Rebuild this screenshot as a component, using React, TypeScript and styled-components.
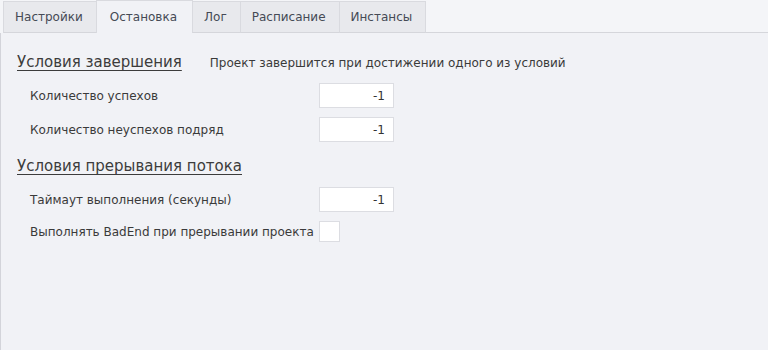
import styled, {createGlobalStyle} from 'styled-components'

const GlobalStyle = createGlobalStyle`
  html, body {
    margin: 0;
    padding: 0;
    background: #f1f2f6;
  }
  body {
    font-family: 'DejaVu Sans', 'Liberation Sans', sans-serif;
    color: #3a3a3a;
  }
`

const TABS = ['Настройки', 'Остановка', 'Лог', 'Расписание', 'Инстансы']
const ACTIVE_TAB = 1

type FieldRow = {label: string; value?: string; checkbox?: boolean}

const SECTIONS: {title: string; hint?: string; rows: FieldRow[]}[] = [
  {
    title: 'Условия завершения',
    hint: 'Проект завершится при достижении одного из условий',
    rows: [
      {label: 'Количество успехов', value: '-1'},
      {label: 'Количество неуспехов подряд', value: '-1'},
    ],
  },
  {
    title: 'Условия прерывания потока',
    rows: [
      {label: 'Таймаут выполнения (секунды)', value: '-1'},
      {label: 'Выполнять BadEnd при прерывании проекта', checkbox: true},
    ],
  },
]

export default function App() {
  return (
    <>
      <GlobalStyle />
      <Window>
        <TabBar>
          {TABS.map((tab, i) => (
            <Tab key={tab} $active={i === ACTIVE_TAB}>
              {tab}
            </Tab>
          ))}
          <TabFiller />
        </TabBar>
        <Panel>
          {SECTIONS.map((section) => (
            <Section key={section.title}>
              <SectionHead>
                <SectionTitle>{section.title}</SectionTitle>
                {section.hint && <Hint>{section.hint}</Hint>}
              </SectionHead>
              {section.rows.map((row) => (
                <Row key={row.label}>
                  <Label>{row.label}</Label>
                  {row.checkbox ? <CheckBox /> : <NumberBox>{row.value}</NumberBox>}
                </Row>
              ))}
            </Section>
          ))}
        </Panel>
      </Window>
    </>
  )
}

const Window = styled.div`
  width: 768px;
  height: 350px;
  display: flex;
  flex-direction: column;
  overflow: hidden;
  font-size: 12px;
`
const TabBar = styled.div`
  display: flex;
  align-items: flex-end;
  height: 33px;
  padding-left: 3px;
  background: #f4f5f8;
  flex-shrink: 0;
`
const Tab = styled.div<{$active: boolean}>`
  box-sizing: border-box;
  height: ${(p) => (p.$active ? '33px' : '32px')};
  padding: ${(p) => (p.$active ? '0 15px 1px 13px' : '0 13px 0 11px')};
  display: flex;
  align-items: center;
  border: 1px solid #d9dadf;
  border-bottom: ${(p) => (p.$active ? 'none' : '1px solid #d5d6db')};
  margin-left: -1px;
  background: ${(p) => (p.$active ? '#f1f2f6' : '#e8e9ed')};
  color: #454a55;
  white-space: nowrap;
  &:first-child {
    margin-left: 0;
  }
`
const TabFiller = styled.div`
  flex: 1;
  align-self: stretch;
  border-bottom: 1px solid #d5d6db;
`
const Panel = styled.div`
  flex: 1;
  border-left: 1px solid #d3d4da;
  padding: 20px 0 0 16px;
`
const Section = styled.div`
  display: flex;
  flex-direction: column;
  margin-bottom: 6px;
`
const SectionHead = styled.div`
  display: flex;
  align-items: baseline;
  gap: 28px;
  margin-bottom: 12px;
`
const SectionTitle = styled.span`
  font-size: 15px;
  text-decoration: underline;
  text-underline-offset: 3px;
  color: #3c3c3c;
`
const Hint = styled.span`
  font-size: 12px;
  color: #3a3a3a;
`
const Row = styled.div`
  display: grid;
  grid-template-columns: 289px 75px;
  align-items: center;
  padding-left: 13px;
  margin-bottom: 9px;
`
const Label = styled.span`
  color: #3a3a3a;
`
const NumberBox = styled.div`
  box-sizing: border-box;
  height: 25px;
  background: #fff;
  border: 1px solid #dcdde2;
  display: flex;
  align-items: center;
  justify-content: flex-end;
  padding-right: 8px;
  color: #333;
`
const CheckBox = styled.div`
  box-sizing: border-box;
  width: 21px;
  height: 21px;
  background: #fff;
  border: 1px solid #dcdde2;
`
